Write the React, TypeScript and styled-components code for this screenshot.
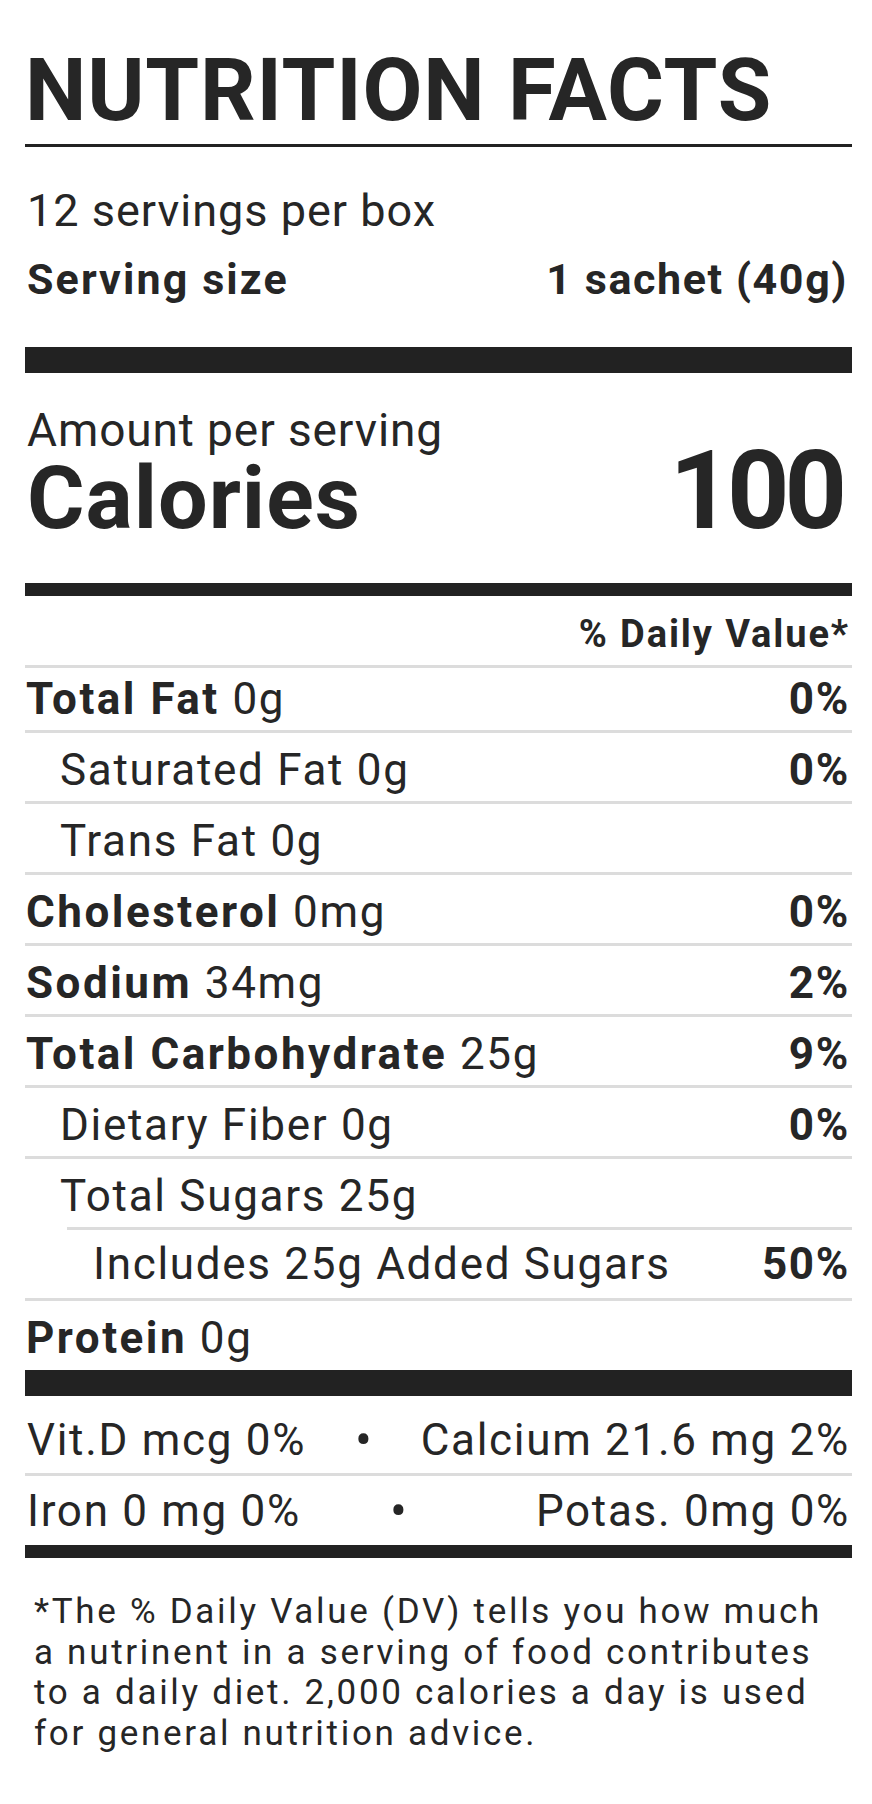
import React from "react";
import styled, { createGlobalStyle } from "styled-components";

const GlobalStyle = createGlobalStyle`
  html, body {
    margin: 0;
    padding: 0;
    background: #ffffff;
  }
  body {
    font-family: Roboto, "Liberation Sans", Arial, sans-serif;
    color: #262626;
  }
`;

const Label = styled.main`
  width: 827px;
  margin-left: 25px;
  padding-top: 47px;
  padding-bottom: 40px;
`;

const Title = styled.h1`
  margin: 0;
  font-size: 87px;
  line-height: 87px;
  font-weight: 700;
  letter-spacing: 0.8px;
  white-space: nowrap;
`;

const Bar = styled.div<{ $h: number; $mt?: number }>`
  height: ${(p) => p.$h}px;
  margin-top: ${(p) => p.$mt ?? 0}px;
  background: #222222;
`;

const Servings = styled.p`
  margin: 38px 0 0;
  padding-left: 2px;
  font-size: 45px;
  line-height: 52px;
  font-weight: 400;
  letter-spacing: 1px;
`;

const ServingSize = styled.div`
  margin-top: 16px;
  padding: 0 4px 0 2px;
  display: flex;
  justify-content: space-between;
  font-size: 43px;
  line-height: 52px;
  font-weight: 700;
  letter-spacing: 2.1px;
`;

const ServingValue = styled.span`
  letter-spacing: 1.6px;
`;

const CalorieBlock = styled.section`
  margin-top: 31px;
  padding: 0 10px 0 2px;
  display: flex;
  justify-content: space-between;
  align-items: flex-end;
`;

const CalorieLabels = styled.div`
  display: flex;
  flex-direction: column;
`;

const Amount = styled.span`
  font-size: 46px;
  line-height: 52px;
  font-weight: 400;
  letter-spacing: 0.9px;
`;

const Calories = styled.span`
  font-size: 88px;
  line-height: 84px;
  font-weight: 700;
  letter-spacing: 1px;
`;

const CalorieValue = styled.span`
  font-size: 109px;
  line-height: 98px;
  font-weight: 700;
  letter-spacing: -5px;
`;

const DvHeader = styled.div`
  height: 69px;
  box-sizing: border-box;
  padding: 6px 2px 0 0;
  display: flex;
  align-items: center;
  justify-content: flex-end;
  font-size: 38px;
  font-weight: 700;
  letter-spacing: 1.9px;
`;

const Divider = styled.div<{ $inset?: number }>`
  height: 3px;
  margin-left: ${(p) => p.$inset ?? 0}px;
  background: #dcdcdc;
`;

const NutrientRow = styled.div<{ $h: number; $pt: number; $indent: number }>`
  height: ${(p) => p.$h}px;
  box-sizing: border-box;
  padding: ${(p) => p.$pt}px 2px 0 ${(p) => p.$indent}px;
  display: flex;
  align-items: center;
  justify-content: space-between;
  font-size: 44px;
  font-weight: 400;
  letter-spacing: 1.7px;
  white-space: nowrap;
`;

const Strong = styled.b`
  font-weight: 700;
  letter-spacing: 2.5px;
`;

const Percent = styled.span`
  font-weight: 700;
`;

const VitaminRow = styled.div<{ $h: number; $pt: number }>`
  height: ${(p) => p.$h}px;
  box-sizing: border-box;
  padding: ${(p) => p.$pt}px 2px 0 2px;
  display: flex;
  align-items: center;
  justify-content: space-between;
  font-size: 44px;
  font-weight: 400;
  letter-spacing: 1.7px;
  white-space: nowrap;
`;

const Dot = styled.span<{ $shift: number }>`
  font-size: 50px;
  margin-right: ${(p) => p.$shift}px;
  letter-spacing: 0;
`;

const Footnote = styled.p`
  margin: 0;
  padding: 34px 0 0 9px;
  font-size: 35px;
  line-height: 40.6px;
  font-weight: 400;
  letter-spacing: 2.7px;
  white-space: pre-line;
`;

type Nutrient = {
  bold?: string;
  text: string;
  dv?: string;
  indent: number;
  h: number;
  pt: number;
  after?: number;
};

const nutrients: Nutrient[] = [
  { bold: "Total Fat", text: " 0g", dv: "0%", indent: 1, h: 62, pt: 0, after: 0 },
  { text: "Saturated Fat 0g", dv: "0%", indent: 35, h: 68, pt: 5, after: 0 },
  { text: "Trans Fat 0g", indent: 35, h: 68, pt: 5, after: 0 },
  { bold: "Cholesterol", text: " 0mg", dv: "0%", indent: 1, h: 68, pt: 5, after: 0 },
  { bold: "Sodium", text: " 34mg", dv: "2%", indent: 1, h: 68, pt: 5, after: 0 },
  { bold: "Total Carbohydrate", text: " 25g", dv: "9%", indent: 1, h: 68, pt: 5, after: 0 },
  { text: "Dietary Fiber 0g", dv: "0%", indent: 35, h: 68, pt: 5, after: 0 },
  { text: "Total Sugars 25g", indent: 35, h: 68, pt: 5, after: 42 },
  { text: "Includes 25g Added Sugars", dv: "50%", indent: 68, h: 68, pt: 0, after: 0 },
  { bold: "Protein", text: " 0g", indent: 1, h: 69, pt: 5 },
];

const vitamins = [
  { left: "Vit.D mcg 0%", right: "Calcium 21.6 mg 2%", shift: 0, h: 77, pt: 10 },
  { left: "Iron 0 mg 0%", right: "Potas. 0mg 0%", shift: 40, h: 69, pt: 0 },
];

const footnote = [
  "*The % Daily Value (DV) tells you how much",
  "a nutrinent in a serving of food contributes",
  "to a daily diet. 2,000 calories a day is used",
  "for general nutrition advice.",
].join("\n");

export default function App() {
  return (
    <>
      <GlobalStyle />
      <Label>
        <Title>NUTRITION FACTS</Title>
        <Bar $h={3} $mt={10} />
        <Servings>12 servings per box</Servings>
        <ServingSize>
          <span>Serving size</span>
          <ServingValue>1 sachet (40g)</ServingValue>
        </ServingSize>
        <Bar $h={26} $mt={42} />
        <CalorieBlock>
          <CalorieLabels>
            <Amount>Amount per serving</Amount>
            <Calories>Calories</Calories>
          </CalorieLabels>
          <CalorieValue>100</CalorieValue>
        </CalorieBlock>
        <Bar $h={13} $mt={43} />
        <DvHeader>% Daily Value*</DvHeader>
        <Divider />
        {nutrients.map((n, i) => (
          <React.Fragment key={i}>
            <NutrientRow $h={n.h} $pt={n.pt} $indent={n.indent}>
              <span>
                {n.bold && <Strong>{n.bold}</Strong>}
                {n.text}
              </span>
              {n.dv && <Percent>{n.dv}</Percent>}
            </NutrientRow>
            {n.after !== undefined && <Divider $inset={n.after} />}
          </React.Fragment>
        ))}
        <Bar $h={26} />
        {vitamins.map((v, i) => (
          <React.Fragment key={i}>
            <VitaminRow $h={v.h} $pt={v.pt}>
              <span>{v.left}</span>
              <Dot $shift={v.shift}>•</Dot>
              <span>{v.right}</span>
            </VitaminRow>
            {i === 0 && <Divider />}
          </React.Fragment>
        ))}
        <Bar $h={13} />
        <Footnote>{footnote}</Footnote>
      </Label>
    </>
  );
}
